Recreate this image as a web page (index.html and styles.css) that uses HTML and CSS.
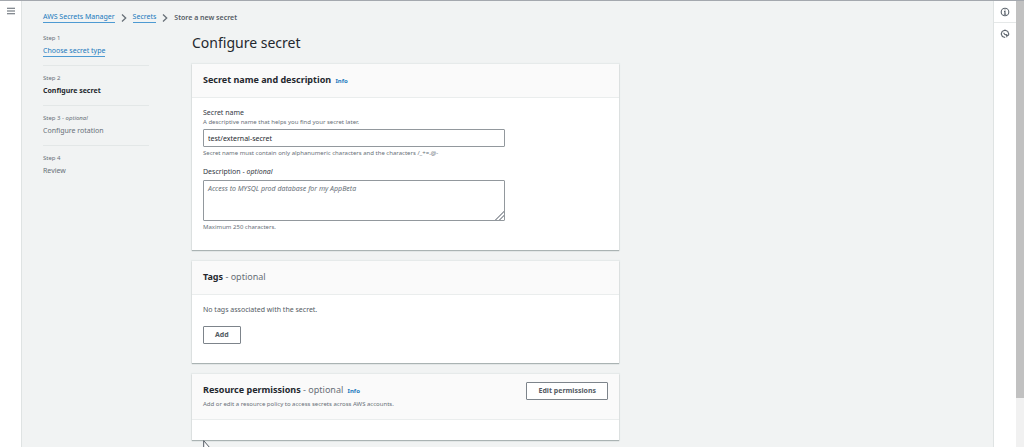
FILE: index.html
```html
<!DOCTYPE html>
<html lang="en">
<head>
<meta charset="utf-8">
<title>Store a new secret</title>
<link rel="stylesheet" href="styles.css">
</head>
<body>
<div class="app">
  <nav class="rail rail-left" aria-label="Navigation">
    <button class="icon-button" aria-label="Open navigation">
      <svg width="8" height="8" viewBox="0 0 8 8"><path d="M0 1.2h8M0 4h8M0 6.8h8"/></svg>
    </button>
  </nav>
  <main class="main">
    <nav class="breadcrumbs" aria-label="Breadcrumbs">
      <a class="link" href="#">AWS Secrets Manager</a>
      <svg class="chevron" width="6" height="8" viewBox="0 0 6 8"><path d="M1 .5 4.7 4 1 7.5"/></svg>
      <a class="link" href="#">Secrets</a>
      <svg class="chevron" width="6" height="8" viewBox="0 0 6 8"><path d="M1 .5 4.7 4 1 7.5"/></svg>
      <span class="current">Store a new secret</span>
    </nav>
    <div class="columns">
      <ol class="steps">
        <li class="step"><span class="step-label">Step 1</span><a class="link step-title" href="#">Choose secret type</a></li>
        <li class="step"><span class="step-label">Step 2</span><strong class="step-title active">Configure secret</strong></li>
        <li class="step"><span class="step-label">Step 3 - <i>optional</i></span><span class="step-title">Configure rotation</span></li>
        <li class="step"><span class="step-label">Step 4</span><span class="step-title">Review</span></li>
      </ol>
      <div class="content">
        <h1 class="title">Configure secret</h1>
        <section class="card">
          <header class="card-header">
            <h2 class="card-title">Secret name and description <a class="info" href="#">Info</a></h2>
          </header>
          <div class="card-body form">
            <div class="field">
              <label class="label" for="name">Secret name</label>
              <p class="hint">A descriptive name that helps you find your secret later.</p>
              <input class="control" id="name" type="text" value="test/external-secret">
              <p class="hint constraint">Secret name must contain only alphanumeric characters and the characters /_+=.@-</p>
            </div>
            <div class="field">
              <label class="label description-label" for="description">Description - <i>optional</i></label>
              <textarea class="control area" id="description" placeholder="Access to MYSQL prod database for my AppBeta"></textarea>
              <p class="hint constraint">Maximum 250 characters.</p>
            </div>
          </div>
        </section>
        <section class="card">
          <header class="card-header">
            <h2 class="card-title">Tags <span class="optional">- optional</span></h2>
          </header>
          <div class="card-body tags">
            <p class="text">No tags associated with the secret.</p>
            <button class="button">Add</button>
          </div>
        </section>
        <section class="card">
          <header class="card-header split">
            <div>
              <h2 class="card-title">Resource permissions <span class="optional">- optional</span> <a class="info" href="#">Info</a></h2>
              <p class="hint summary">Add or edit a resource policy to access secrets across AWS accounts.</p>
            </div>
            <button class="button">Edit permissions</button>
          </header>
          <div class="card-body empty"></div>
        </section>
      </div>
    </div>
  </main>
  <aside class="rail rail-right" aria-label="Tools">
    <button class="icon-button tool" aria-label="Info">
      <svg width="10" height="10" viewBox="0 0 10 10"><circle cx="5" cy="5" r="3.8"/><path d="M5 2.4v1.2M4 4.6h1v2.6M3.8 7.2h2.4"/></svg>
    </button>
    <button class="icon-button tool" aria-label="Tutorials">
      <svg width="10" height="10" viewBox="0 0 10 10"><path d="M5.2 8.5 2.4 7.6 1.2 5 2.2 2.3 5 1.2 7.7 2.3 8.8 5 8.4 6.4M3.6 3.8l1.2 1.8 2.2.2"/><path class="solid" d="m5 5 4.2 1.2-1.6.9-.7 1.7z"/></svg>
    </button>
  </aside>
  <div class="scrollbar"><div class="thumb"></div></div>
  <svg class="cursor" width="8" height="13" viewBox="0 0 8 13"><path d="M.7.7v10l2.3-2 1.5 3.5 1.3-.6-1.5-3.3h3z"/></svg>
</div>
</body>
</html>
```
FILE: styles.css
```css
* { box-sizing: border-box; }

body {
  margin: 0;
  background: #f1f3f3;
  color: #24282e;
  font: 7px/10px "Noto Sans", "Open Sans", sans-serif;
}

h1, h2, p, ol { margin: 0; padding: 0; }

.app {
  position: relative;
  display: flex;
  height: 100vh;
  overflow: hidden;
  border-top: 1px solid #a4a8ae;
}

.rail {
  flex: none;
  width: 22px;
  background: #fff;
}

.rail-left { border-right: 1px solid #dfe3e3; padding-top: 5px; }
.rail-right { width: 23px; border-left: 1px solid #dfe3e3; }

.icon-button {
  display: flex;
  align-items: center;
  justify-content: center;
  width: 100%;
  height: 10px;
  padding: 0;
  border: 0;
  background: none;
}

.icon-button svg { fill: none; stroke: #5c646d; stroke-width: 1.1; }
.icon-button .solid { fill: #5c646d; stroke: none; }
.tool { height: 21px; }
.tool:first-child { height: 22px; border-bottom: 1px solid #e5e8e8; }

.scrollbar { flex: none; width: 8px; background: #f1f1f1; }
.thumb { height: 89%; background: #c1c1c1; }

.main { flex: 1; min-width: 0; padding: 11px 21px; }

.breadcrumbs { display: flex; align-items: center; gap: 6px; height: 11px; }
.chevron { fill: none; stroke: #687078; stroke-width: 1.3; }
.current { color: #545b64; font-weight: 600; }

.link {
  color: #2079bd;
  text-decoration: none;
  border-bottom: 1px solid #4d9ad2;
}

.columns { display: flex; gap: 43px; margin-top: 10px; }
.steps { flex: none; width: 106px; list-style: none; }
.step { height: 40px; }
.step + .step { border-top: 1px solid #e3e7e7; padding-top: 7px; }
.step:first-child { height: 32px; }
.step-label { display: block; color: #687078; font-size: 6px; }
.step-title { display: inline-block; margin-top: 3px; color: #687078; }
.step-title.link { color: #2079bd; }
.step-title.active { color: #24282e; }

.content { flex: 0 1 427px; min-width: 0; }
.title { margin-bottom: 11px; font-size: 14px; line-height: 20px; font-weight: 400; }

.card {
  margin-bottom: 11px;
  background: #fff;
  box-shadow: 0 1px 1px #aab3b3, 0 0 1px 1px #e6eaea;
}

.card-header { padding: 8px 11px 10px; background: #fafafa; border-bottom: 1px solid #eaeded; }
.card-title { font-size: 9px; line-height: 15px; font-weight: 700; }
.optional { color: #687078; font-weight: 400; }
.info { margin-left: 2px; color: #2079bd; font-size: 6px; line-height: 6px; font-weight: 700; text-decoration: none; }
.split { display: flex; justify-content: space-between; align-items: flex-start; }
.summary { margin-top: 3px; }

.card-body { padding: 10px 11px; }
.form { padding-bottom: 18px; }
.field + .field { margin-top: 9px; }
.label { display: block; color: #33383f; }
.description-label { margin-bottom: 3px; }
.hint { color: #687078; font-size: 6px; line-height: 9px; }
.constraint { margin-top: 2px; }

.control {
  display: block;
  width: 100%;
  max-width: 302px;
  height: 18px;
  margin-top: 2px;
  padding: 3px 4px;
  border: 1px solid #92989d;
  border-radius: 1px;
  background: #fff;
  color: #24282e;
  font: inherit;
}

.area { height: 41px; resize: vertical; }
.area::placeholder { color: #687078; font-style: italic; }
.area::-webkit-resizer {
  background: linear-gradient(135deg, transparent 68%, #a4a8ae 68% 74%, transparent 74% 82%, #a4a8ae 82% 88%, transparent 88%);
}

.text { color: #545b64; }

.button {
  height: 18px;
  padding: 0 11px;
  border: 1px solid #7d848b;
  border-radius: 1px;
  background: #fff;
  color: #545b64;
  font: inherit;
  font-weight: 700;
}

.tags { padding-bottom: 19px; }
.tags .button { margin-top: 11px; }
.empty { height: 20px; padding: 0; }

.cursor {
  position: absolute;
  left: 203px;
  bottom: -6px;
  fill: #fff;
  stroke: #545b64;
}
```
